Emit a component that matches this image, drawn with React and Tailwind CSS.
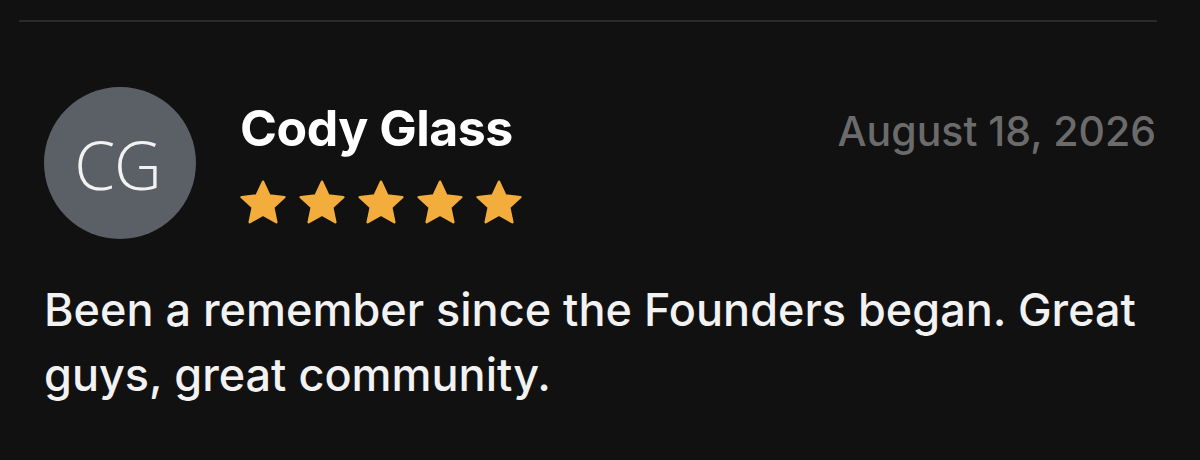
const Star = () => (
  <svg viewBox="0 0 24 24" className="w-[50px] h-[50px]" fill="#f3ad3c">
    <path d="M12 1.8l3.05 6.6 7.2.8-5.35 4.9 1.5 7.1L12 17.6l-6.4 3.6 1.5-7.1L1.75 9.2l7.2-.8z" strokeLinejoin="round" stroke="#f3ad3c" strokeWidth="1.2" />
  </svg>
);

export default function App() {
  return (
    <div className="w-[1200px] h-[460px] bg-[#111111] pt-5 px-[19px]" style={{ fontFamily: 'Inter, "Noto Sans", sans-serif' }}>
      <div className="border-t-2 border-[#2a2a2a] w-[1138px]" />
      <div className="flex items-start mt-[65px] pl-[25px] pr-[25px]">
        <div className="w-[152px] h-[152px] rounded-full bg-[#5b6067] flex items-center justify-center shrink-0">
          <span className="text-[#f2f2f2] text-[66px] leading-none font-light tracking-[-1px] -ml-[5px] mt-[2px]" style={{ fontFamily: '"Open Sans", sans-serif' }}>CG</span>
        </div>
        <div className="ml-[44px] flex-1 pt-[17px]">
          <div className="flex items-start justify-between">
            <div className="text-white font-bold text-[50px] leading-[48px] tracking-[-0.5px]">Cody Glass</div>
            <div className="text-[#6b6b6b] font-medium text-[41px] leading-[48px] mt-[3px]">August 18, 2026</div>
          </div>
          <div className="flex gap-[9px] mt-[23px] -ml-[2px]">
            <Star /><Star /><Star /><Star /><Star />
          </div>
        </div>
      </div>
      <p className="text-[#f2f2f2] text-[45px] leading-[65px] mt-[38px] pl-[25px] w-[1160px] font-medium">
        Been a remember since the Founders began. Great guys, great community.
      </p>
    </div>
  );
}
